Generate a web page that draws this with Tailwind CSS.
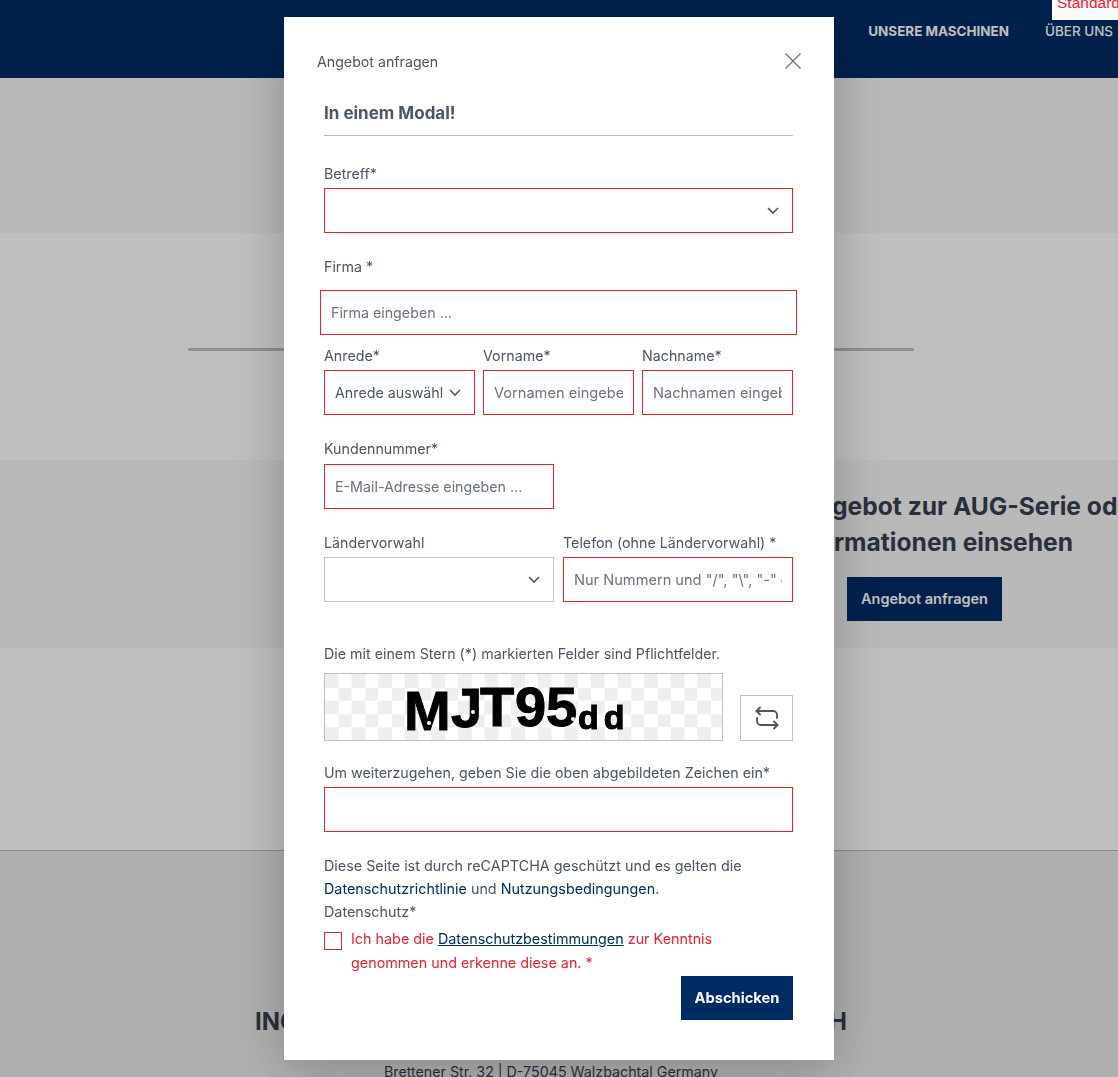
<!DOCTYPE html>
<html lang="de">
<head>
    <meta charset="utf-8" />
    <meta name="viewport" content="width=device-width, initial-scale=1.0" />
    <title>Angebot anfragen</title>
    <script src="https://cdn.jsdelivr.net/npm/@tailwindcss/browser@4"></script>
</head>
<body class="h-[1077px] overflow-hidden bg-white font-['Inter',sans-serif] text-[14.25px] text-[#4b5563]">

    <!-- Page behind the modal -->
    <header class="h-[78px] bg-[#002c66] flex justify-end items-center pr-[5px] pb-[15px] gap-[36px] text-[13.45px] text-white whitespace-nowrap">
        <a href="#" class="font-bold">UNSERE MASCHINEN</a>
        <a href="#" class="font-medium">ÜBER UNS</a>
    </header>
    <section class="h-[155px] bg-[#f7f7f7]"></section>
    <section class="h-[227px] pt-[115px] pl-[188px] pr-[204px]">
        <div class="h-[3px] rounded-full bg-[#c0c0c0]"></div>
    </section>
    <section class="h-[188px] bg-[#f7f7f7] pt-[28px] text-[24.6px] leading-[36px] font-bold text-[#374151] whitespace-nowrap overflow-hidden">
        <div class="pl-[613px]">Fordern Sie ein Angebot zur AUG-Serie oder weitere</div>
        <div class="w-[1073px] text-right">weitere Informationen einsehen</div>
        <div class="pl-[847px] mt-[17px]">
            <a href="#" class="inline-flex items-center justify-center w-[155px] h-[44px] bg-[#002c66] text-white text-[14.5px] font-semibold">Angebot anfragen</a>
        </div>
    </section>
    <section class="h-[202px]"></section>
    <footer class="h-[227px] bg-[#ebebeb] border-t border-[#bdbdbd] pt-[155px] pl-[255px] whitespace-nowrap">
        <div class="w-[592px] text-[24px] leading-[32px] font-bold text-[#374151] [text-align-last:justify]">INGENIEURBÜRO FÜR MASCHINENBAU GMBH</div>
        <div class="w-[592px] mt-[23px] text-center text-[#374151]">Brettener Str. 32 | D-75045 Walzbachtal Germany</div>
    </footer>

    <!-- Backdrop -->
    <div class="fixed inset-0 bg-black/25"></div>

    <div class="fixed top-0 right-0 w-[66px] h-[20px] pl-[5px] bg-[#fafafa] overflow-hidden font-['Liberation_Sans',sans-serif] text-[15.5px] leading-[6px] text-[#e8222a] whitespace-nowrap">Standard</div>

    <!-- Modal -->
    <div class="fixed top-[17px] left-[284px] w-[550px] h-[1043px] bg-white shadow-[0_8px_50px_rgba(0,0,0,0.25)]">
        <div class="h-[89px] pl-[33px] pr-[33px] pt-[36px] flex justify-between items-start">
            <h2 class="text-[14.2px] leading-[17px]">Angebot anfragen</h2>
            <button class="text-[#6b7280]" aria-label="Schließen">
                <svg width="16" height="16" viewBox="0 0 16 16" fill="none" stroke="currentColor" stroke-width="1.3"><path d="M0.5 0.5 15.5 15.5M15.5 0.5 0.5 15.5"/></svg>
            </button>
        </div>

        <form class="pl-[40px] pr-[41px]">
            <h3 class="h-[30px] border-b border-[#bbbbbb] text-[17px] leading-[15px] font-bold">In einem Modal!</h3>

            <label class="block mt-[29px] mb-[5px] leading-[18px]">Betreff*</label>
            <div class="relative">
                <select class="block w-full h-[45px] border border-[#e8222a] appearance-none px-[10px] bg-white"><option></option></select>
                <svg class="absolute right-[14px] top-[19px]" width="12" height="8" viewBox="0 0 12 8" fill="none" stroke="#4b5563" stroke-width="1.6"><path d="M1 1 6 6 11 1"/></svg>
            </div>

            <label class="block mt-[25px] mb-[14px] leading-[18px]">Firma *</label>
            <input type="text" placeholder="Firma eingeben ..." class="block -mx-[4px] w-[477px] h-[45px] border border-[#e8222a] px-[10px] placeholder:text-[#6b7280]" />

            <div class="grid grid-cols-3 gap-x-[8px] mt-[12px]">
                <div>
                    <label class="block mb-[5px] leading-[18px]">Anrede*</label>
                    <div class="relative">
                        <select class="block w-full h-[45px] border border-[#e8222a] appearance-none pl-[10px] pr-[30px] bg-white text-[#4b5563]"><option>Anrede auswählen</option></select>
                        <svg class="absolute right-[14px] top-[19px]" width="12" height="8" viewBox="0 0 12 8" fill="none" stroke="#4b5563" stroke-width="1.6"><path d="M1 1 6 6 11 1"/></svg>
                    </div>
                </div>
                <div>
                    <label class="block mb-[5px] leading-[18px]">Vorname*</label>
                    <input type="text" placeholder="Vornamen eingeben ..." class="block w-full h-[45px] border border-[#e8222a] px-[10px] text-[14.6px] placeholder:text-[#6b7280]" />
                </div>
                <div>
                    <label class="block mb-[5px] leading-[18px]">Nachname*</label>
                    <input type="text" placeholder="Nachnamen eingeben ..." class="block w-full h-[45px] border border-[#e8222a] px-[10px] text-[14.6px] placeholder:text-[#6b7280]" />
                </div>
            </div>

            <div class="grid grid-cols-2 gap-x-[9px] mt-[25px]">
                <div>
                    <label class="block mb-[6px] leading-[18px]">Kundennummer*</label>
                    <input type="text" placeholder="E-Mail-Adresse eingeben ..." class="block w-full h-[45px] border border-[#e8222a] px-[10px] placeholder:text-[#6b7280]" />
                </div>
                <div></div>
            </div>

            <div class="grid grid-cols-2 gap-x-[9px] mt-[25px]">
                <div>
                    <label class="block mb-[5px] leading-[18px]">Ländervorwahl</label>
                    <div class="relative">
                        <select class="block w-full h-[45px] border border-[#bcc0c6] appearance-none px-[10px] bg-white"><option></option></select>
                        <svg class="absolute right-[14px] top-[19px]" width="12" height="8" viewBox="0 0 12 8" fill="none" stroke="#4b5563" stroke-width="1.6"><path d="M1 1 6 6 11 1"/></svg>
                    </div>
                </div>
                <div>
                    <label class="block mb-[5px] leading-[18px]">Telefon (ohne Ländervorwahl) *</label>
                    <input type="text" placeholder="Nur Nummern und &quot;/&quot;, &quot;\&quot;, &quot;-&quot; erlaubt" class="block w-full h-[45px] border border-[#e8222a] px-[10px] text-[14.6px] placeholder:text-[#6b7280]" />
                </div>
            </div>

            <p class="mt-[43px] leading-[18px]">Die mit einem Stern (*) markierten Felder sind Pflichtfelder.</p>

            <div class="flex items-end justify-between mt-[10px]">
                <!-- captcha -->
                <div class="relative w-[399px] h-[68px] border border-[#bcc0c6] overflow-hidden bg-white bg-[conic-gradient(#ffffff_25%,#eeeeee_0_50%,#ffffff_0_75%,#eeeeee_0)] bg-[length:26.6px_26.6px] font-['Liberation_Sans',sans-serif] font-bold text-black whitespace-nowrap select-none [-webkit-text-stroke:1px_black]">
                    <span class="absolute left-[79px] top-[5px] text-[56px] leading-[64px]">M</span>
                    <span class="absolute left-[126px] top-[2px] text-[56px] leading-[64px]">J</span>
                    <span class="absolute left-[155px] top-[1px] text-[56px] leading-[64px]">T</span>
                    <span class="absolute left-[190px] top-[1px] text-[56px] leading-[64px]">9</span>
                    <span class="absolute left-[221px] top-[1px] text-[56px] leading-[64px]">5</span>
                    <span class="absolute left-[253px] top-[23px] text-[34px] leading-[40px] tracking-[5px]">dd</span>
                    <span class="absolute left-[102px] top-[47px] w-[4px] h-[4px] rounded-full bg-white"></span>
                    <span class="absolute left-[146px] top-[36px] w-[4px] h-[4px] rounded-full bg-white"></span>
                    <span class="absolute left-[206px] top-[30px] w-[4px] h-[4px] rounded-full bg-white"></span>
                    <span class="absolute left-[246px] top-[43px] w-[4px] h-[4px] rounded-full bg-white"></span>
                </div>
                <button type="button" class="w-[53px] h-[46px] flex items-center justify-center border border-[#bcc0c6]" aria-label="Neu laden">
                    <svg width="24" height="24" viewBox="0 0 24 24" fill="none" stroke="#4b5563" stroke-width="1.8" stroke-linecap="round" stroke-linejoin="round"><path d="M5 1.5 1.5 5 5 8.5"/><path d="M1.5 5H18a4 4 0 0 1 4 4v3"/><path d="M19 22.5 22.5 19 19 15.5"/><path d="M22.5 19H6a4 4 0 0 1-4-4v-3"/></svg>
                </button>
            </div>

            <label class="block mt-[23px] mb-[5px] leading-[18px]">Um weiterzugehen, geben Sie die oben abgebildeten Zeichen ein*</label>
            <input type="text" class="block w-full h-[45px] border border-[#e8222a] px-[10px]" />

            <p class="mt-[22px] text-[14.35px] leading-[23px]">Diese Seite ist durch reCAPTCHA geschützt und es gelten die<br />
                <a href="#" class="text-[#002c66]">Datenschutzrichtlinie</a> und <a href="#" class="text-[#002c66]">Nutzungsbedingungen</a>.<br />
                Datenschutz*</p>

            <div class="flex items-start gap-[9px] mt-[4px] text-[14.35px] leading-[24px] text-[#e8222a]">
                <input type="checkbox" class="appearance-none w-[18px] h-[18px] mt-[5px] shrink-0 border border-[#e8222a]" />
                <span>Ich habe die <a href="#" class="text-[#002c66] underline">Datenschutzbestimmungen</a> zur Kenntnis<br />genommen und erkenne diese an. *</span>
            </div>

            <div class="flex justify-end mt-[1px]">
                <button type="submit" class="w-[112px] h-[44px] bg-[#002c66] text-white text-[14.7px] font-bold">Abschicken</button>
            </div>
        </form>
    </div>

</body>
</html>
